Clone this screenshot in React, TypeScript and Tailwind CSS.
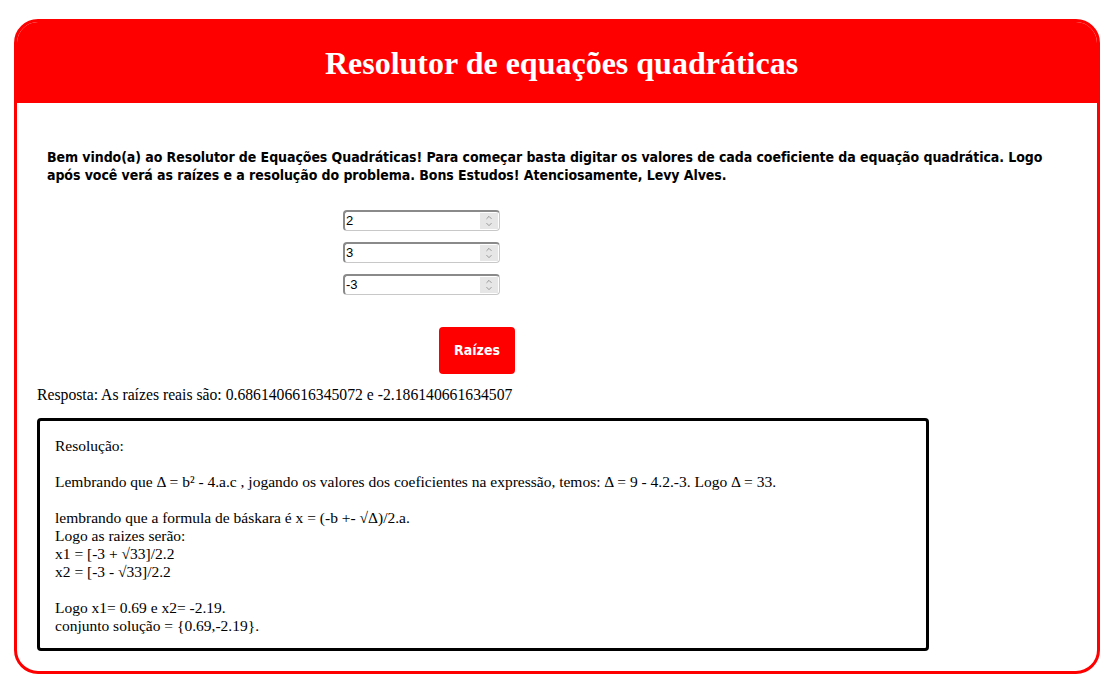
import { ChevronDown, ChevronUp } from 'lucide-react';

const coeficientes = ['2', '3', '-3'];

const serif = { fontFamily: '"Liberation Serif", "Times New Roman", serif' };
const condensed = { fontFamily: '"DejaVu Sans Condensed", "DejaVu Sans", sans-serif' };

const NumberField = ({ value }: { value: string }) => (
  <div className="flex h-[21px] w-[157px] items-stretch rounded-[4px] border border-[#c8c8c8] border-t-2 border-t-[#8a8a8a] border-l-2 border-l-[#8a8a8a] bg-white">
    <div className="flex flex-1 items-center pl-[1px] text-[13px] text-black" style={{ fontFamily: '"Liberation Sans", Arial, sans-serif' }}>
      {value}
    </div>
    <div className="my-[1px] mr-[1px] flex w-[18px] flex-col items-center justify-center bg-[#e6e6e6] text-[#6f6f6f]">
      <ChevronUp size={10} strokeWidth={1.75} className="-mb-[1px]" />
      <ChevronDown size={10} strokeWidth={1.75} className="-mt-[1px]" />
    </div>
  </div>
);

export default function App() {
  return (
    <div className="min-h-[688px] bg-white pt-[19px] pl-[14px]">
      <div className="h-[655px] w-[1086px] overflow-hidden rounded-[24px] border-[3px] border-[#ff0000] bg-white">
        <div className="flex h-[81px] items-center justify-center bg-[#ff0000] pl-[9px]">
          <h1 className="text-[32px] font-bold text-white" style={serif}>
            Resolutor de equações quadráticas
          </h1>
        </div>

        <p className="mt-[45px] px-[30px] text-[14px] font-bold leading-[18px] tracking-[-0.07px] text-black" style={condensed}>
          Bem vindo(a) ao Resolutor de Equações Quadráticas! Para começar basta digitar os valores de cada coeficiente da equação
          quadrática. Logo após você verá as raízes e a resolução do problema. Bons Estudos! Atenciosamente, Levy Alves.
        </p>

        <div className="mt-[26px] flex flex-col gap-[11px] pl-[326px]">
          {coeficientes.map((c, i) => (
            <NumberField key={i} value={c} />
          ))}
        </div>

        <div className="mt-[32px] pl-[422px]">
          <button className="h-[47px] w-[76px] rounded-[4px] bg-[#ff0000] text-[14px] font-bold text-white" style={condensed}>
            Raízes
          </button>
        </div>

        <div className="mt-[12px] pl-[20px] text-[15.7px] leading-[18px] text-black" style={serif}>
          Resposta: As raízes reais são: 0.6861406616345072 e -2.186140661634507
        </div>

        {/* resolução passo a passo */}
        <div
          className="mt-[14px] ml-[20px] h-[233px] w-[892px] rounded-[4px] border-[3px] border-black px-[15px] pt-[16px] text-[15.5px] leading-[18px] text-black"
          style={serif}
        >
          <div>Resolução:</div>
          <div className="mt-[18px]">
            Lembrando que Δ = b² - 4.a.c , jogando os valores dos coeficientes na expressão, temos: Δ = 9 - 4.2.-3. Logo Δ = 33.
          </div>
          <div className="mt-[18px]">lembrando que a formula de báskara é x = (-b +- √Δ)/2.a.</div>
          <div>Logo as raizes serão:</div>
          <div>x1 = [-3 + √33]/2.2</div>
          <div>x2 = [-3 - √33]/2.2</div>
          <div className="mt-[18px]">Logo x1= 0.69 e x2= -2.19.</div>
          <div>conjunto solução = {'{'}0.69,-2.19{'}'}.</div>
        </div>
      </div>
    </div>
  );
}
